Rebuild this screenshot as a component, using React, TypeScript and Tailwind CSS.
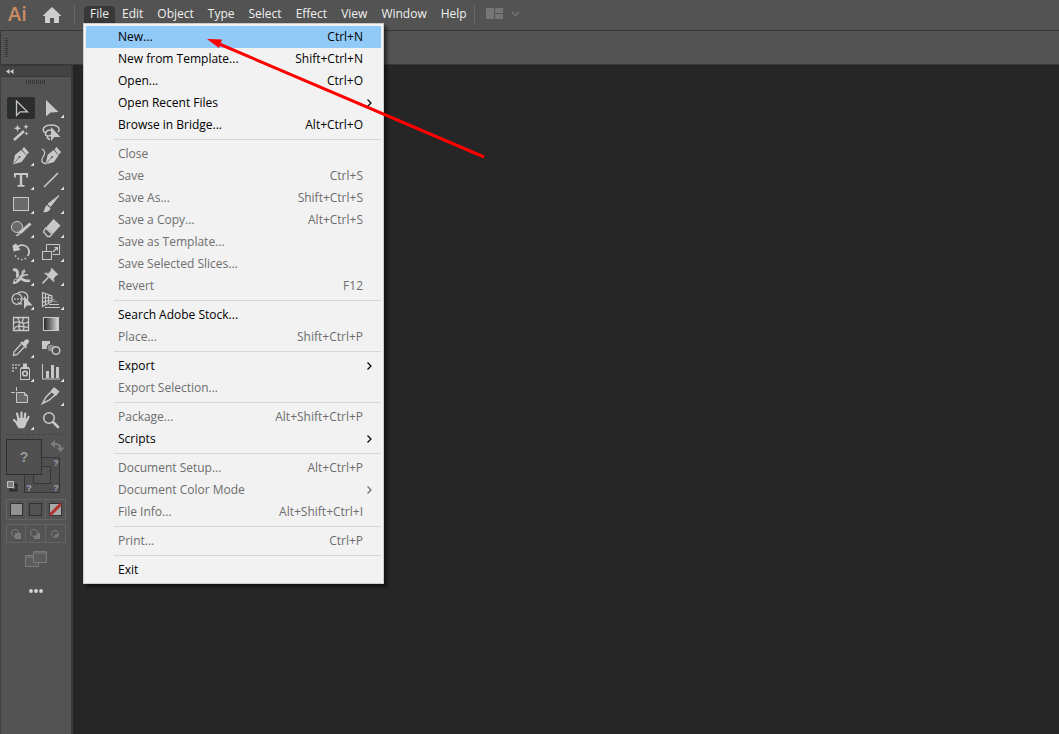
import React from "react";

type MenuEntry = {
  label: string;
  keys?: string;
  submenu?: boolean;
  disabled?: boolean;
  active?: boolean;
};

type Tool = {
  name: string;
  flyout?: boolean;
  active?: boolean;
  icon: React.ReactNode;
};

const topMenus = ["Edit", "Object", "Type", "Select", "Effect", "View", "Window", "Help"];

const fileMenu: MenuEntry[][] = [
  [
    { label: "New...", keys: "Ctrl+N", active: true },
    { label: "New from Template...", keys: "Shift+Ctrl+N" },
    { label: "Open...", keys: "Ctrl+O" },
    { label: "Open Recent Files", submenu: true },
    { label: "Browse in Bridge...", keys: "Alt+Ctrl+O" },
  ],
  [
    { label: "Close", disabled: true },
    { label: "Save", keys: "Ctrl+S", disabled: true },
    { label: "Save As...", keys: "Shift+Ctrl+S", disabled: true },
    { label: "Save a Copy...", keys: "Alt+Ctrl+S", disabled: true },
    { label: "Save as Template...", disabled: true },
    { label: "Save Selected Slices...", disabled: true },
    { label: "Revert", keys: "F12", disabled: true },
  ],
  [
    { label: "Search Adobe Stock..." },
    { label: "Place...", keys: "Shift+Ctrl+P", disabled: true },
  ],
  [
    { label: "Export", submenu: true },
    { label: "Export Selection...", disabled: true },
  ],
  [
    { label: "Package...", keys: "Alt+Shift+Ctrl+P", disabled: true },
    { label: "Scripts", submenu: true },
  ],
  [
    { label: "Document Setup...", keys: "Alt+Ctrl+P", disabled: true },
    { label: "Document Color Mode", submenu: true, disabled: true },
    { label: "File Info...", keys: "Alt+Shift+Ctrl+I", disabled: true },
  ],
  [{ label: "Print...", keys: "Ctrl+P", disabled: true }],
  [{ label: "Exit" }],
];

// Every icon is drawn on a 30x24 grid, strokes and fills use currentColor
const tools: Tool[] = [
  {
    name: "Selection",
    active: true,
    icon: <path d="M10.5 5v14.5l3.6-3.6 7.4-.1z" fill="none" strokeWidth="1.3" />,
  },
  {
    name: "Direct Selection",
    flyout: true,
    icon: <path d="M10 4v16.5l4.500-4 8-.5z" fill="currentColor" stroke="none" />,
  },
  {
    name: "Magic Wand",
    icon: (
      <>
        <path d="M8 20l10-9" strokeWidth="2.6" />
        <path
          d="M11.5 4.5l1 2.800 2.700 1-2.700 1-1 2.700-1-2.700-2.700-1 2.700-1zM20 4l.8 2 2 .8-2 .8-.8 2-.8-2-2-.8 2-.8zM20.5 11.5l.6 1.400 1.400.6-1.400.6-.6 1.400-.6-1.400-1.400-.6 1.400-.6z"
          fill="currentColor"
          stroke="none"
        />
      </>
    ),
  },
  {
    name: "Lasso",
    icon: (
      <>
        <path
          d="M10 13c-3-1-4-4-1-6.300 3-2.200 10-2.200 13 .3 2 2 1 4 0 5M10 13c0-3 5-4 6-1.500s-1 4.500-4 4.500c-2 0-3.500-1.500-2-3zM11 16c0 1.500 1 3 3 3.500"
          fill="none"
          strokeWidth="1.5"
        />
        <path d="M15 7v14l3.500-4h6z" fill="currentColor" stroke="none" />
      </>
    ),
  },
  {
    name: "Pen",
    flyout: true,
    icon: (
      <>
        <path d="M7 20.5l2-9.500 6-5 5.500 5.500-5 6.500z" fill="currentColor" stroke="none" />
        <path d="M16 5.500l2-2.500 5 5.500-2.500 2.500z" fill="currentColor" stroke="none" />
        <path d="M7.500 20l5.500-6.500" stroke="#535353" strokeWidth="0.7" />
        <circle cx="13.5" cy="13" r="1" fill="#535353" stroke="none" />
      </>
    ),
  },
  {
    name: "Curvature",
    icon: (
      <>
        <path d="M9.500 20.500l2-9.500 6-5 5 5.500-4.500 6.500z" fill="currentColor" stroke="none" />
        <path d="M18.500 5.500l2-2.500 4.500 5-2.500 3z" fill="currentColor" stroke="none" />
        <path d="M10 20l5.500-6.500" stroke="#535353" strokeWidth="0.7" />
        <circle cx="16" cy="13" r="1" fill="#535353" stroke="none" />
        <path d="M6 5c4 2 3 5 1 8s-2 6 3 6.500" fill="none" strokeWidth="1.3" />
      </>
    ),
  },
  {
    name: "Type",
    flyout: true,
    icon: (
      <path
        d="M8 5h14v4.500h-1.800V7h-4v10h2.300v1.800h-7V17h2.300V7h-4v2.500H8z"
        fill="currentColor"
        stroke="none"
      />
    ),
  },
  { name: "Line Segment", flyout: true, icon: <path d="M8 19L22 5" strokeWidth="1.6" /> },
  {
    name: "Rectangle",
    flyout: true,
    icon: <rect x="7.5" y="5.5" width="15" height="13" fill="#6a6a6a" />,
  },
  {
    name: "Paintbrush",
    flyout: true,
    icon: (
      <>
        <path d="M23 3.500l-8.500 11-2.500-2.500z" fill="currentColor" strokeWidth="1" />
        <path d="M11 13l3.500 3.200c-.8 3.500-4 4.300-7.500 3.800 2-1.500 1.500-5.500 4-7z" fill="currentColor" stroke="none" />
      </>
    ),
  },
  {
    name: "Shaper",
    flyout: true,
    icon: (
      <>
        <circle cx="11" cy="11" r="5.5" fill="#6a6a6a" />
        <path d="M10 19c2 1 4-1 3-2.500L23.500 8" fill="none" strokeWidth="1.5" />
        <path d="M14 17L24.500 7.500" strokeWidth="3" />
      </>
    ),
  },
  {
    name: "Eraser",
    flyout: true,
    icon: (
      <>
        <path d="M10 11.500L17.500 3l7 6.500-7.500 8.500z" fill="currentColor" stroke="none" />
        <path d="M9.500 12l6.500 6-2 2.500h-2.500L7.500 16z" fill="none" strokeWidth="1.3" />
      </>
    ),
  },
  {
    name: "Rotate",
    flyout: true,
    icon: (
      <>
        <path d="M10.500 7.500a7 6.500 0 0 1 11 8.500" fill="none" strokeWidth="1.8" />
        <path d="M20 18.200a7 6.500 0 0 1-11-3.700" fill="none" strokeWidth="1.6" strokeDasharray="1.6 2" />
        <path d="M6.500 5.500l3.500-2 4.500 6.500-7 1.500z" fill="currentColor" stroke="none" />
      </>
    ),
  },
  {
    name: "Scale",
    flyout: true,
    icon: (
      <>
        <path d="M10.500 11V4.500h13v10h-7" fill="none" />
        <rect x="6.5" y="11.5" width="9" height="8" fill="none" />
        <path d="M17 12l3-3" fill="none" strokeWidth="1.4" />
        <path d="M18 7h4v4z" fill="currentColor" stroke="none" />
      </>
    ),
  },
  {
    name: "Width",
    flyout: true,
    icon: (
      <>
        <path
          d="M7 6c4-1 5 1.500 4.500 5s1.500 4 3.500 1 2.500-5 4-5.500M7 18.500c4 1 5-2 7-3.500s4 3.500 10 1.500"
          fill="none"
          strokeWidth="2.8"
        />
        <path d="M12 17c0-3 6-7 10-6" fill="none" strokeWidth="1.6" />
        <path d="M10 16l7-8" stroke="#535353" />
        <circle cx="9.5" cy="16.5" r="1.4" fill="#535353" />
        <circle cx="17" cy="8" r="1" fill="#535353" />
      </>
    ),
  },
  {
    name: "Puppet Warp",
    flyout: true,
    icon: (
      <>
        <path d="M15.500 4l6.500 6.500-2 1-2.500 3 .5 3.500-9.500-9 4 .5 2.500-3z" fill="currentColor" stroke="currentColor" strokeWidth="0.6" />
        <path d="M12.500 13l-6 6.500" strokeWidth="1.6" />
      </>
    ),
  },
  {
    name: "Shape Builder",
    flyout: true,
    icon: (
      <>
        <path d="M11 6c3-3.500 9-2.500 10.500 1.500 1 2.500.5 4-.5 5.500M16 16c-1.500 0-3-.5-4-1.500" fill="none" strokeWidth="1.3" />
        <ellipse cx="11" cy="11" rx="5" ry="5.3" fill="none" strokeWidth="1.3" />
        <path d="M8 11h10" strokeWidth="1.6" strokeDasharray="1.6 1.400" />
        <path d="M18 8v13l3-3.500h5.500z" fill="currentColor" stroke="none" />
      </>
    ),
  },
  {
    name: "Perspective Grid",
    flyout: true,
    icon: (
      <>
        <path d="M6.500 4.500v14l9.500-5V8zM9.500 5.500v11M12.500 6.500v9M6.500 9.500l9.500.5M6.500 14l9.500-2" fill="none" strokeWidth="1.2" />
        <path d="M16 11.500h3M16 13.500h5" stroke="#909090" fill="none" />
        <path d="M13 16.500h10M9 19.500h15" fill="none" />
      </>
    ),
  },
  {
    name: "Mesh",
    icon: (
      <path
        d="M7.500 5.500h15v13h-15zM8 11c4-4 8 3 14-1M8 17c4-6 8-1 14-2M11 6c6 3-1 8 3 12M18 6c-5 4 3 7-1 12"
        fill="none"
        strokeWidth="1.3"
      />
    ),
  },
  {
    name: "Gradient",
    icon: (
      <>
        <defs>
          <linearGradient id="tool-gradient">
            <stop offset="0" stopColor="#222" />
            <stop offset="1" stopColor="#ddd" />
          </linearGradient>
        </defs>
        <rect x="7.5" y="5.5" width="15" height="13" fill="url(#tool-gradient)" />
      </>
    ),
  },
  {
    name: "Eyedropper",
    flyout: true,
    icon: (
      <>
        <path d="M15 8l-7 8-.5 3.500 3.500-.8 7-7.500" fill="none" strokeWidth="1.3" />
        <path d="M14 6.500l1.500-1 1.500.8c2-3.300 4.500-3.800 5.500-2.500s.5 3.500-2.200 5.700l.5 2-1.300 1z" fill="currentColor" stroke="none" />
      </>
    ),
  },
  {
    name: "Blend",
    icon: (
      <>
        <rect x="6" y="5" width="8" height="8" fill="currentColor" stroke="none" />
        <circle cx="15" cy="12" r="4" fill="#8a8a8a" stroke="#535353" />
        <circle cx="20" cy="14.5" r="3.8" fill="#535353" strokeWidth="1.5" />
      </>
    ),
  },
  {
    name: "Symbol Sprayer",
    flyout: true,
    icon: (
      <>
        <path
          d="M6 4h2v2H6zM9 4h2v2H9zM12 4h2v2h-2zM6 7h2v2H6zM9 7h2v2H9zM6 10h2v2H6z"
          fill="#a0a0a0"
          stroke="none"
        />
        <path d="M17 3.500h4V7h2v2h-8V7h2z" fill="currentColor" stroke="none" />
        <path d="M14.500 8.500h9v11h-9z" fill="none" />
        <circle cx="19" cy="13.5" r="2.3" fill="none" strokeWidth="1.6" />
      </>
    ),
  },
  {
    name: "Column Graph",
    flyout: true,
    icon: (
      <>
        <path d="M6.500 4v15H24" fill="none" />
        <path d="M10 11h3v7h-3zM15 5h3v13h-3zM20 7h3v11h-3z" fill="currentColor" stroke="none" />
      </>
    ),
  },
  {
    name: "Artboard",
    icon: (
      <>
        <path d="M10.500 3v4M5 8.500h4" fill="none" />
        <path d="M10.500 8.500h8l3 3v7h-11z" fill="#6a6a6a" />
        <path d="M18.500 8.500v3h3" fill="none" />
      </>
    ),
  },
  {
    name: "Slice",
    flyout: true,
    icon: (
      <>
        <path d="M15.500 7.500L10 13l-3.500 6.500 7-3.500 6-5.500z" fill="none" strokeWidth="1.5" />
        <path d="M14.500 7L18 3l5.500 4.500-3.500 4.500z" fill="currentColor" stroke="none" />
      </>
    ),
  },
  {
    name: "Hand",
    flyout: true,
    icon: (
      <>
        <path d="M12.500 11L11 5.500M15.500 10V4.500M18.500 11l.8-5.500M20.500 13l2-4M12 16l-4-4" strokeWidth="2.2" strokeLinecap="round" />
        <path d="M11.500 10h8.500l1.500 2.500-2 5.500-1.500 2.200h-5.500L10 16z" fill="currentColor" stroke="none" />
      </>
    ),
  },
  {
    name: "Zoom",
    icon: (
      <>
        <circle cx="13" cy="10" r="5.3" fill="none" strokeWidth="1.5" />
        <path d="M17 14l5 5" strokeWidth="2.6" strokeLinecap="round" />
      </>
    ),
  },
];

const ToolButton: React.FC<{ tool: Tool }> = ({ tool }) => (
  <button
    type="button"
    aria-label={tool.name}
    aria-pressed={!!tool.active}
    className="h-6 w-[30px] text-[#c8c8c8]"
  >
    <svg viewBox="0 0 30 24" className="block h-6 w-[30px]" stroke="currentColor">
      {tool.active && <rect x="1" y="1" width="28" height="22" rx="2" fill="#2c2e2e" stroke="none" />}
      {tool.icon}
      {tool.flyout && <path d="M28 18.500V22h-3.500z" fill="#e0e0e0" stroke="none" />}
    </svg>
  </button>
);

const MenuRow: React.FC<{ entry: MenuEntry }> = ({ entry }) => (
  <button
    type="button"
    role="menuitem"
    disabled={entry.disabled}
    className={`flex h-[22px] w-full items-center pl-8 text-left ${
      entry.submenu ? "pr-2" : "pr-[18px]"
    } ${entry.active ? "bg-[#91c9f7]" : ""} ${entry.disabled ? "text-[#6d6d6d]" : "text-black"}`}
  >
    <span className="flex-1">{entry.label}</span>
    {entry.keys && <span>{entry.keys}</span>}
    {entry.submenu && (
      <svg viewBox="0 0 7 10" className="h-[10px] w-[7px]" fill="none" stroke="currentColor">
        <path d="M1.500 1.500L5 5 1.500 8.500" strokeWidth="1.2" />
      </svg>
    )}
  </button>
);

const FileMenu: React.FC = () => (
  <div
    role="menu"
    className="absolute top-full -left-px z-10 w-[301px] border border-[#cccccc] bg-[#f2f2f2] p-[2px] shadow-[3px_3px_3px_rgba(0,0,0,0.5)]"
  >
    {fileMenu.map((group, i) => (
      <React.Fragment key={i}>
        {i > 0 && <hr className="my-[3px] ml-7 border-t border-[#d7d7d7]" />}
        {group.map((entry) => (
          <MenuRow key={entry.label} entry={entry} />
        ))}
      </React.Fragment>
    ))}
  </div>
);

const MenuBar: React.FC = () => (
  <header className="flex h-[31px] items-start border-b border-[#383838] bg-[#535353] text-[#f0f0f0]">
    <span className="w-[34px] pl-2 text-xl leading-7 font-semibold text-[#c98d63]">Ai</span>
    <button type="button" aria-label="Home" className="mt-[7px] ml-2 h-4 w-5 text-[#cdcdcd]">
      <svg viewBox="0 0 20 16" className="block h-4 w-5" fill="currentColor">
        <path d="M10 0l9.500 9H17v7h-5v-5H8v5H3V9H.5z" />
      </svg>
    </button>
    <div className="mt-[5px] ml-3 h-5 w-px bg-[#666666]" />
    <nav className="ml-[9px] flex items-start pt-[6px]">
      <div className="relative">
        <button type="button" className="block h-[17px] w-[31px] rounded-t-sm bg-[#383838] pb-px leading-4">
          File
        </button>
        <FileMenu />
      </div>
      {topMenus.map((name) => (
        <button key={name} type="button" className="block h-[17px] px-[7px] pb-px leading-4">
          {name}
        </button>
      ))}
    </nav>
    <div className="mt-[5px] h-5 w-px bg-[#666666]" />
    <button type="button" aria-label="Arrange Documents" className="mt-2 ml-[11px] text-[#757575]">
      <svg viewBox="0 0 34 11" className="block h-[11px] w-[34px]" fill="currentColor">
        <path d="M0 0h8v11H0zM9 0h8v5H9zM9 6h8v5H9z" />
        <path d="M26 4l3.500 3.500L33 4" fill="none" stroke="currentColor" strokeWidth="1.3" />
      </svg>
    </button>
  </header>
);

const ColorSwatches: React.FC = () => (
  <svg viewBox="0 0 60 56" className="mt-1 block h-14 w-[60px] font-['Liberation_Sans',sans-serif]">
    <path d="M18.500 18.500h35v35h-35zM27.500 27.500h17v17h-17z" fill="#4f4f4f" fillRule="evenodd" stroke="#353535" />
    <g fill="#a3a3b8" fontSize="9" fontWeight="bold" textAnchor="middle">
      <text x="50" y="27">?</text>
      <text x="23" y="52">?</text>
      <text x="50" y="52">?</text>
    </g>
    <rect x="0.5" y="0.5" width="35" height="35" fill="#505050" stroke="#303030" />
    <text x="18" y="23" fill="#9a9a9a" fontSize="14" fontWeight="bold" textAnchor="middle">
      ?
    </text>
    <path d="M48 5c5 0 6.500 1 6.500 5" fill="none" stroke="#7d7d7d" strokeWidth="2" />
    <path d="M44.500 5L49 1v8zM50.500 8.500h8l-4 4.500z" fill="#7d7d7d" />
    <path d="M4.500 45.500h6v6h-6z" fill="none" stroke="#2c2c2c" strokeWidth="2" />
    <path d="M1.500 42.500h6v6h-6z" fill="#7d7d7d" stroke="#c0c0c0" />
  </svg>
);

const ToolPanel: React.FC = () => (
  <aside className="w-[73px] shrink-0 border-r-2 border-l border-[#3a3a3a] border-l-[#404040] bg-[#535353]">
    <div className="flex h-3 items-center border-y border-[#383838] bg-[#434343] pl-[5px]">
      <svg viewBox="0 0 8 5" className="h-[5px] w-2" fill="#d0d0d0">
        <path d="M3.500 0v5L0 2.500zM7.500 0v5L4 2.500z" />
      </svg>
    </div>
    <svg viewBox="0 0 20 4" className="mx-auto mt-[3px] block h-1 w-5" stroke="#383838">
      <path d="M0 2h20" strokeWidth="4" strokeDasharray="1 1" />
    </svg>
    <div className="mt-3 ml-[5px] w-[60px]">
      <div className="grid grid-cols-2">
        {tools.map((tool) => (
          <ToolButton key={tool.name} tool={tool} />
        ))}
      </div>
      <div className="mt-[2px] border-t border-dashed border-[#434343]" />
      <ColorSwatches />
      <div className="mt-1 grid h-[21px] grid-cols-3 divide-x divide-[#646464] border border-[#646464]">
        <button type="button" aria-label="Color" className="grid place-items-center">
          <span className="h-[13px] w-[13px] border border-[#333333] bg-[#929292]" />
        </button>
        <button type="button" aria-label="Gradient fill" className="grid place-items-center">
          <span className="h-[13px] w-[13px] border border-[#303030]" />
        </button>
        <button type="button" aria-label="None" className="grid place-items-center">
          <svg viewBox="0 0 13 13" className="h-[13px] w-[13px]">
            <rect x="0.5" y="0.5" width="12" height="12" fill="#aaaaaa" stroke="#333333" />
            <path d="M1 12L12 1" stroke="#b3322c" strokeWidth="3" />
          </svg>
        </button>
      </div>
      <div className="mt-1 grid h-[19px] grid-cols-3 divide-x divide-[#646464] border border-[#646464]">
        <button type="button" aria-label="Draw Normal" className="grid place-items-center">
          <svg viewBox="0 0 12 12" className="h-3 w-3">
            <circle cx="5" cy="5" r="3.5" fill="none" stroke="#7c7c7c" />
            <path d="M5 5h6v6H5z" fill="#7c7c7c" />
          </svg>
        </button>
        <button type="button" aria-label="Draw Behind" className="grid place-items-center">
          <svg viewBox="0 0 12 12" className="h-3 w-3">
            <path d="M5 5h6v6H5z" fill="#7c7c7c" />
            <circle cx="5" cy="5" r="3.5" fill="#535353" stroke="#7c7c7c" />
          </svg>
        </button>
        <button type="button" aria-label="Draw Inside" className="grid place-items-center">
          <svg viewBox="0 0 12 12" className="h-3 w-3">
            <circle cx="6" cy="6" r="3.5" fill="none" stroke="#7c7c7c" />
            <path d="M6 6h3.500A3.500 3.500 0 0 1 6 9.500z" fill="#7c7c7c" />
          </svg>
        </button>
      </div>
      <button type="button" aria-label="Change Screen Mode" className="mx-auto mt-2 block">
        <svg viewBox="0 0 22 16" className="block h-4 w-[22px]" fill="#5c5c5c" stroke="#7c7c7c">
          <path d="M.5 4.500h13v11H.5zM.5 6h13" />
          <path d="M8.500.5h13v11h-13zM8.500 2h13" />
        </svg>
      </button>
      <button type="button" aria-label="Edit Toolbar" className="mx-auto mt-[22px] block">
        <svg viewBox="0 0 14 4" className="block h-1 w-[14px]" fill="#d6d6d6">
          <circle cx="2" cy="2" r="1.9" />
          <circle cx="7" cy="2" r="1.9" />
          <circle cx="12" cy="2" r="1.9" />
        </svg>
      </button>
    </div>
  </aside>
);

const App: React.FC = () => {
  return (
    <div className="relative flex min-h-screen flex-col overflow-hidden bg-[#262626] font-['Open_Sans','Noto_Sans',sans-serif] text-xs">
      <MenuBar />
      <div className="flex h-[34px] items-center border-b border-l border-[#383838] bg-[#535353] pl-1">
        <svg viewBox="0 0 3 20" className="h-5 w-[3px]" stroke="#383838">
          <path d="M1.500 0v20" strokeWidth="3" strokeDasharray="1 1" />
        </svg>
      </div>
      <div className="flex flex-1">
        <ToolPanel />
        <main className="flex-1 bg-[#262626]" />
      </div>
      {/* red pointer to File > New */}
      <svg viewBox="0 0 278 120" className="pointer-events-none absolute top-[38px] left-[207px] z-20 h-[120px] w-[278px]">
        <path d="M10 5L276 118.500" stroke="#ff0000" strokeWidth="3" strokeLinecap="round" />
        <path d="M0 1l15 .5-3 8.500z" fill="#ff0000" />
      </svg>
    </div>
  );
};

export default App;
